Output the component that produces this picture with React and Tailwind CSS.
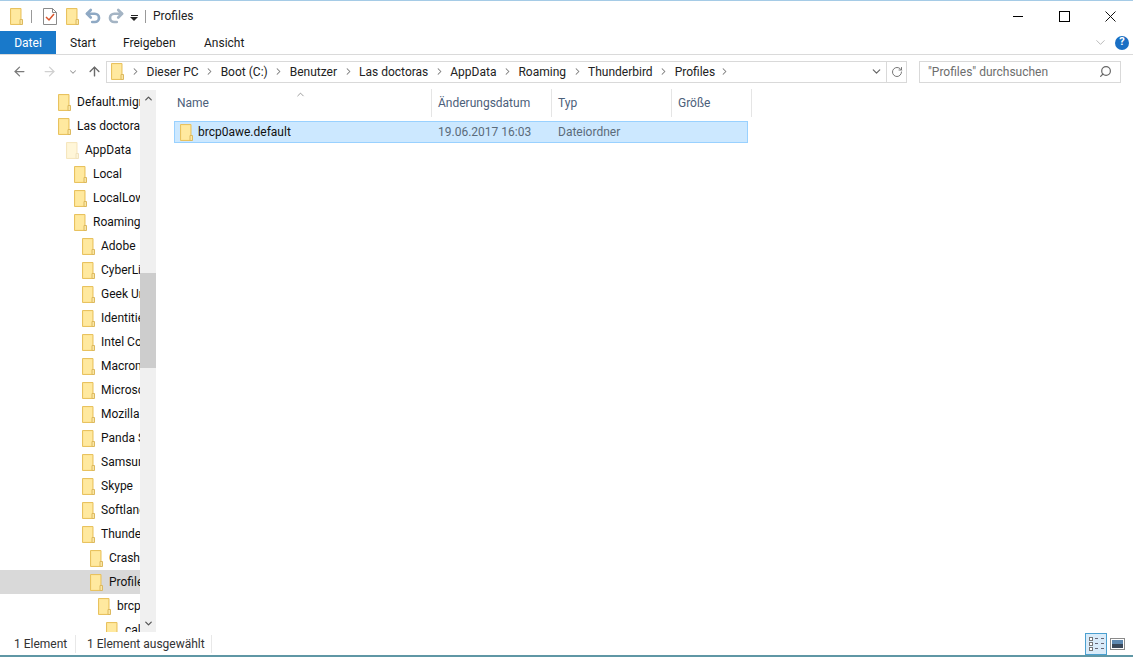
import { ArrowLeft, ArrowRight, ArrowUp, ChevronDown, ChevronRight, ChevronUp, RotateCw, Search, Undo2, Redo2 } from "lucide-react";

const treeItems = [
  { name: "Default.migrated", depth: 0 },
  { name: "Las doctoras", depth: 0 },
  { name: "AppData", depth: 1, faded: true },
  { name: "Local", depth: 2 },
  { name: "LocalLow", depth: 2 },
  { name: "Roaming", depth: 2 },
  { name: "Adobe", depth: 3 },
  { name: "CyberLink", depth: 3 },
  { name: "Geek Uninstaller", depth: 3 },
  { name: "Identities", depth: 3 },
  { name: "Intel Corporation", depth: 3 },
  { name: "Macromedia", depth: 3 },
  { name: "Microsoft", depth: 3 },
  { name: "Mozilla", depth: 3 },
  { name: "Panda Security", depth: 3 },
  { name: "Samsung", depth: 3 },
  { name: "Skype", depth: 3 },
  { name: "Softland", depth: 3 },
  { name: "Thunderbird", depth: 3 },
  { name: "Crash Reports", depth: 4 },
  { name: "Profiles", depth: 4, active: true },
  { name: "brcp0awe.default", depth: 5 },
  { name: "calendar-data", depth: 6 },
];

const depthClasses = ["pl-[58px]", "pl-[66px]", "pl-[74px]", "pl-[82px]", "pl-[90px]", "pl-[98px]", "pl-[106px]"];

const crumbs = ["Dieser PC", "Boot (C:)", "Benutzer", "Las doctoras", "AppData", "Roaming", "Thunderbird", "Profiles"];

const columns = [
  { label: "Name", className: "w-[258px] pl-[3px]" },
  { label: "Änderungsdatum", className: "w-[120px] pl-[6px]" },
  { label: "Typ", className: "w-[120px] pl-[6px]" },
  { label: "Größe", className: "w-[80px] pl-[6px]" },
];

const FolderIcon = ({ faded }) => (
  <svg width="13" height="17" viewBox="0 0 13 17" className={`shrink-0 ${faded ? "opacity-40" : ""}`}>
    <path d="M.5.5h10.5v16H.5z" fill="#fde28f" stroke="#e8c25f" />
    <path d="M1.5 1.5h8.5v14H1.5z" fill="#ffe99f" />
    <path d="M10 11.5h2.5v5H10z" fill="#fbe6a4" stroke="#dcb95f" />
  </svg>
);

const TreeRow = ({ item }) => (
  <div className={`h-6 flex items-center gap-[6px] ${depthClasses[item.depth]} ${item.active ? "bg-[#d9d9d9]" : ""}`}>
    <FolderIcon faded={item.faded} />
    <span className="whitespace-nowrap text-[#111]">{item.name}</span>
  </div>
);

const App = () => {
  return (
    <div className="w-[1133px] h-[657px] overflow-hidden bg-white flex flex-col text-[12px] text-[#1a1a1a] font-['Roboto',sans-serif] border-t border-[#a5cbe6]">
      {/* title bar */}
      <div className="h-[30px] flex items-center shrink-0">
        <div className="pl-[10px] pt-[1px]"><FolderIcon /></div>
        <div className="w-px h-[13px] bg-[#999] ml-[8px]" />
        <svg width="14" height="17" viewBox="0 0 14 17" className="ml-[11px]">
          <path d="M.5.5h9l4 4v12H.5z" fill="#fff" stroke="#8a8a8a" />
          <path d="M9.500.5v4h4" fill="none" stroke="#8a8a8a" />
          <path d="M3 9l3 3 5-6" fill="none" stroke="#d9542b" strokeWidth="1.5" />
        </svg>
        <div className="ml-[9px]"><FolderIcon /></div>
        <Undo2 size={18} strokeWidth={3.6} className="text-[#8fa9c4] ml-[5px]" />
        <Redo2 size={18} strokeWidth={3.6} className="text-[#a4b4c4] ml-[5px]" />
        <div className="ml-[5px] flex flex-col items-center gap-[1px] mt-[3px]">
          <div className="w-[7px] h-px bg-[#222]" />
          <div className="w-0 h-0 border-x-[4px] border-x-transparent border-t-[4px] border-t-[#222]" />
        </div>
        <div className="w-px h-[13px] bg-[#999] ml-[7px]" />
        <span className="ml-[7px] text-[#222]">Profiles</span>
        <div className="ml-auto flex items-center">
          <div className="w-[46px] flex justify-center"><div className="w-[10px] h-px bg-black" /></div>
          <div className="w-[46px] flex justify-center"><div className="w-[11px] h-[11px] border border-black" /></div>
          <div className="w-[46px] flex justify-center">
            <svg width="11" height="11" viewBox="0 0 11 11"><path d="M.5.5l10 10M10.500.5l-10 10" stroke="#111" fill="none" /></svg>
          </div>
        </div>
      </div>

      {/* ribbon tabs */}
      <div className="h-[24px] flex items-stretch border-b border-[#dadada] shrink-0">
        <div className="w-[56px] bg-[#1979ca] text-white flex items-center justify-center">Datei</div>
        <div className="w-[53px] flex items-center pl-[14px]">Start</div>
        <div className="w-[81px] flex items-center pl-[14px]">Freigeben</div>
        <div className="w-[56px] flex items-center pl-[14px]">Ansicht</div>
        <div className="ml-auto flex items-center gap-[7px] pr-[4px]">
          <ChevronDown size={15} strokeWidth={1.25} className="text-[#a8a8a8]" />
          <div className="w-[14px] h-[14px] rounded-full bg-[#1a6fc4] text-white text-[11px] font-bold flex items-center justify-center">?</div>
        </div>
      </div>

      {/* nav bar */}
      <div className="h-[34px] flex items-center shrink-0 pb-[1px]">
        <ArrowLeft size={15} strokeWidth={2} className="text-[#7a7a7a] ml-[12px]" />
        <ArrowRight size={15} strokeWidth={2} className="text-[#d0d0d0] ml-[15px]" />
        <ChevronDown size={10} strokeWidth={2.5} className="text-[#9a9a9a] ml-[11px]" />
        <ArrowUp size={15} strokeWidth={2.25} className="text-[#6a6a6a] ml-[9px]" />
        <div className="ml-[4px] w-[801px] h-[22px] border border-[#d9d9d9] flex items-center">
          <div className="pl-[4px]"><FolderIcon /></div>
          <div className="flex items-center pl-[1px]">
            {crumbs.map((c) => (
              <div key={c} className="flex items-center">
                <ChevronRight size={11} strokeWidth={2.25} className="text-[#7a7a7a] mx-[5px]" />
                <span className="text-[#222] px-[0.5px] whitespace-nowrap">{c}</span>
              </div>
            ))}
            <ChevronRight size={11} strokeWidth={2.25} className="text-[#7a7a7a] mx-[3px]" />
          </div>
          <ChevronDown size={13} strokeWidth={2.25} className="text-[#666] ml-auto mr-[3px]" />
          <div className="w-[20px] h-full border-l border-[#d9d9d9] flex items-center justify-center">
            <RotateCw size={12} strokeWidth={2} className="text-[#777]" />
          </div>
        </div>
        <div className="ml-[12px] w-[202px] h-[22px] border border-[#d9d9d9] flex items-center justify-between pl-[8px] pr-[8px]">
          <span className="text-[#6d6d6d]">"Profiles" durchsuchen</span>
          <Search size={13} strokeWidth={2.25} className="text-[#666] -scale-x-100" />
        </div>
      </div>

      {/* main area */}
      <div className="flex-1 flex min-h-0 pt-[1px]">
        <div className="w-[140px] overflow-hidden shrink-0">
          {treeItems.map((item) => <TreeRow key={item.name} item={item} />)}
        </div>
        <div className="w-[16px] bg-[#f0f0f0] shrink-0 flex flex-col items-center justify-between">
          <div className="h-[17px] flex items-center"><ChevronUp size={11} strokeWidth={2.75} className="text-[#555]" /></div>
          <div className="flex-1 w-full pt-[166px] pb-[247px]">
            <div className="w-full h-full bg-[#cdcdcd]" />
          </div>
          <div className="h-[17px] flex items-center"><ChevronDown size={11} strokeWidth={2.75} className="text-[#555]" /></div>
        </div>

        <div className="flex-1 pl-[18px] relative">
          <ChevronUp size={11} strokeWidth={1.25} className="absolute left-[139px] -top-[1px] text-[#555]" />
          <div className="flex h-[28px] text-[#4c607a] -mt-[1px]">
            {columns.map((col) => (
              <div key={col.label} className={`${col.className} flex items-center border-r border-[#e5e5e5]`}>{col.label}</div>
            ))}
          </div>
          <div className="w-[574px] h-[22px] mt-[4px] bg-[#cce8ff] border border-[#99d1ff] flex items-center">
            <div className="w-[263px] flex items-center gap-[5px] pl-[5px] text-[#111]">
              <FolderIcon />
              <span>brcp0awe.default</span>
            </div>
            <div className="w-[120px] text-[#5b6b7a]">19.06.2017 16:03</div>
            <div className="text-[#5b6b7a]">Dateiordner</div>
          </div>
        </div>
      </div>

      {/* status bar */}
      <div className="h-[23px] flex items-center shrink-0 text-[#333]">
        <div className="w-[76px] pl-[14px] border-r border-[#e8e8e8]">1 Element</div>
        <div className="w-[136px] pl-[11px] border-r border-[#e8e8e8]">1 Element ausgewählt</div>
        <div className="ml-auto flex items-center pr-[8px]">
          <div className="w-[22px] h-[22px] bg-[#d9ebf9] border border-[#4ba0d0] flex flex-col items-center justify-center gap-[1px]">
            {[0, 1, 2].map((i) => (
              <div key={i} className="flex items-center gap-[2px]">
                <div className="w-[4px] h-[4px] border border-[#777] bg-white" />
                <div className="w-[9px] h-px border-t border-dashed border-[#667]" />
              </div>
            ))}
          </div>
          <svg width="15" height="12" viewBox="0 0 15 12" className="ml-[3px]">
            <rect x=".5" y=".5" width="14" height="11" fill="#fff" stroke="#8a8a8a" />
            <rect x="2" y="2" width="11" height="4" fill="#5d88b0" />
            <rect x="2" y="6" width="11" height="4" fill="#39485a" />
          </svg>
        </div>
      </div>
      <div className="h-[2px] bg-[#5f97a5] shrink-0" />
    </div>
  );
};

export default App;
